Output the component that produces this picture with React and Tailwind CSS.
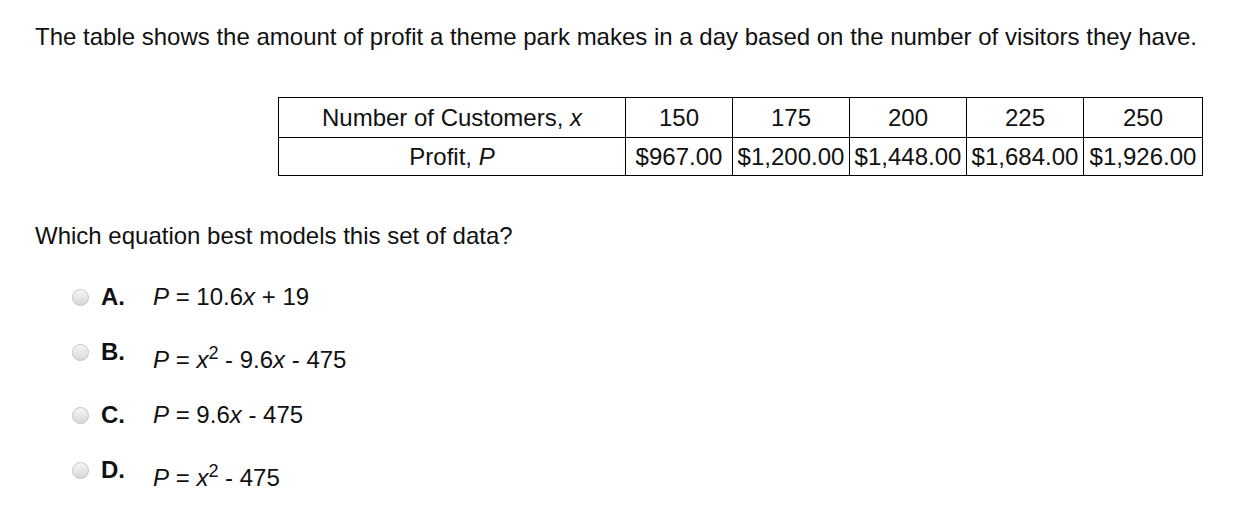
import React from 'react';

const COLS = [
  { x: '150', p: '$967.00', w: 'w-[107px]' },
  { x: '175', p: '$1,200.00', w: 'w-[117px]' },
  { x: '200', p: '$1,448.00', w: 'w-[117px]' },
  { x: '225', p: '$1,684.00', w: 'w-[117px]' },
  { x: '250', p: '$1,926.00', w: 'w-[119px]' },
];

function Radio() {
  return (
    <span className="inline-block w-[17px] h-[17px] rounded-full border border-[#c4c4c4] bg-gradient-to-b from-[#f6f6f6] to-[#d8d8d8] shrink-0" />
  );
}

function Choice({ letter, children, sup }) {
  return (
    <div className={`flex items-start ${sup ? 'h-[63px]' : 'h-[55px]'}`}>
      <div className="flex items-center h-[28px] pl-[72px]">
        <Radio />
        <span className="ml-[12px] w-[52px] font-bold">{letter}</span>
      </div>
      <div className={sup ? 'pt-[8px] leading-[28px]' : 'leading-[28px]'}>{children}</div>
    </div>
  );
}

export default function App() {
  return (
    <div className="bg-white w-[1239px] h-[525px] text-[24px] text-[#111] font-['Liberation_Sans',Arial,sans-serif]">
      <p className="pl-[35px] pt-[23px] leading-[28px]">
        The table shows the amount of profit a theme park makes in a day based on the number of visitors they have.
      </p>

      <div className="flex justify-end pr-[36px] mt-[46px]">
        <table className="border-collapse border border-black">
          <tbody>
            <tr className="h-[40px]">
              <td className="w-[347px] border border-black text-center">
                Number of Customers, <i>x</i>
              </td>
              {COLS.map((c) => (
                <td key={c.x} className={`${c.w} border border-black text-center`}>{c.x}</td>
              ))}
            </tr>
            <tr className="h-[38px]">
              <td className="border border-black text-center">
                Profit, <i>P</i>
              </td>
              {COLS.map((c) => (
                <td key={c.p} className="border border-black text-center px-0">{c.p}</td>
              ))}
            </tr>
          </tbody>
        </table>
      </div>

      <p className="pl-[35px] mt-[46px] leading-[28px]">Which equation best models this set of data?</p>

      <div className="mt-[33px]">
        <Choice letter="A.">
          <i>P</i> = 10.6<i>x</i> + 19
        </Choice>
        <Choice letter="B." sup>
          <i>P</i> = <i>x</i><span className="text-[18px] relative top-[-9px]">2</span> - 9.6<i>x</i> - 475
        </Choice>
        <Choice letter="C.">
          <i>P</i> = 9.6<i>x</i> - 475
        </Choice>
        <Choice letter="D." sup>
          <i>P</i> = <i>x</i><span className="text-[18px] relative top-[-9px]">2</span> - 475
        </Choice>
      </div>
    </div>
  );
}
